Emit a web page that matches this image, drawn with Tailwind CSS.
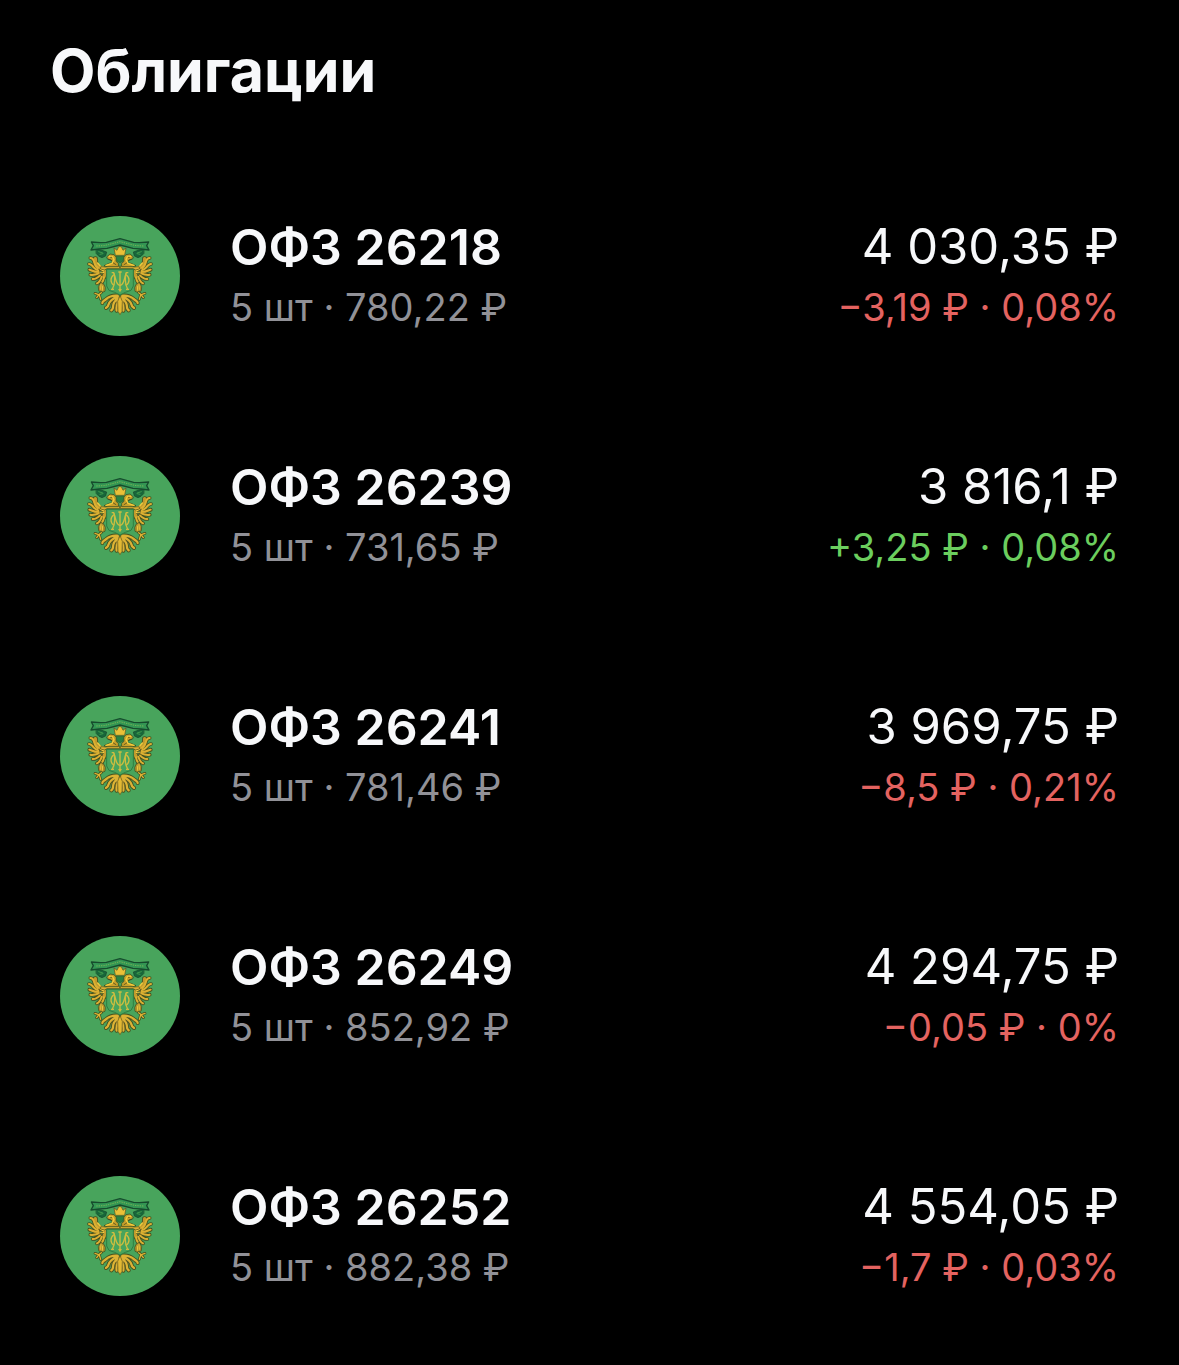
<!DOCTYPE html>
<html lang="ru">
<head>
    <meta charset="UTF-8">
    <meta name="viewport" content="width=device-width, initial-scale=1.0">
    <title>Облигации</title>
    <script src="https://cdn.jsdelivr.net/npm/@tailwindcss/browser@4"></script>
</head>
<body class="min-h-screen bg-black font-['Inter','Liberation_Sans',sans-serif] text-[#f7f8fa]">
    <!-- Shared issuer emblem -->
    <svg class="hidden" aria-hidden="true">
        <defs>
            <g id="half" stroke-linecap="round" stroke-linejoin="round">
                <!-- Side heads -->
                <path d="M139 129l17 4 14 5-3 12-11 5-9-4-8-8z" fill="#17663a" stroke="#174a2b" stroke-width="2"/>
                <path d="M146 137l12 4M150 145l9-2" stroke="#3f9a4c" stroke-width="3" fill="none"/>
                <!-- Wing feathers, dark edge below the gold -->
                <g fill="none">
                    <path d="M121 156c6 0 10 6 12 14s5 13 12 16M117 174c6 0 10 5 14 10s8 7 14 8M118 191c6 2 14 7 28 7M121 206c8 2 16 0 26-4M128 219c8 1 15-4 22-11M141 232c6-3 11-10 14-20M154 232c4-4 7-10 8-18" stroke="#44501f" stroke-width="11"/>
                    <path d="M136 158c-1 14 4 24 18 30s12 10 8 24" stroke="#44501f" stroke-width="15"/>
                    <path d="M136 158c-1 14 4 24 18 30s12 10 8 24" stroke="#c29a2c" stroke-width="10"/>
                    <path d="M121 156c6 0 10 6 12 14s5 13 12 16M117 174c6 0 10 5 14 10s8 7 14 8M118 191c6 2 14 7 28 7M121 206c8 2 16 0 26-4M128 219c8 1 15-4 22-11M141 232c6-3 11-10 14-20M154 232c4-4 7-10 8-18" stroke="#dcb032" stroke-width="6"/>
                    <path d="M143 171l8 9 10 4M152 190l9 4M153 199l8 1" stroke="#f2cf42" stroke-width="4"/>
                    <path d="M146 190l8 5M147 205l9-4M155 208l5-5" stroke="#625720" stroke-width="3"/>
                </g>
                <path d="M154 182l14 1 14-4 27 1v8h-38l-8 4-11-3z" fill="#d9ae32" stroke="#44501f" stroke-width="2"/>
                <!-- Eagle head and neck -->
                <path d="M171 152l9-8 12 2 7 8-1 12 7 6v10h-34l-9-3 15-7 11-2-4-8-11-3z" fill="#c9a02a" stroke="#2b431d" stroke-width="2"/>
                <path d="M178 151l10 1 4 9-6 11-18 6" stroke="#f3cd3d" stroke-width="4" fill="none"/>
                <path d="M182 154h3M175 160l8 3M190 171l8 5" stroke="#3a3e1c" stroke-width="2" fill="none"/>
                <!-- Leg and claw -->
                <path d="M153 229l9 6 4 10-1 11-10 4-9-6-1-11z" fill="#b18f2a" stroke="#3a4c1f" stroke-width="2"/>
                <path d="M153 236l-1 14M158 240l-1 13" stroke="#efc93d" stroke-width="3" fill="none"/>
                <path d="M154 260l-8 6-11-4M146 267l-6 8M148 267l4 13" stroke="#3a4c1f" stroke-width="8" fill="none"/>
                <path d="M154 260l-8 6-11-4M146 267l-6 8M148 267l4 13" stroke="#dfb433" stroke-width="4" fill="none"/>
                <!-- Tail feathers -->
                <g fill="none">
                    <path d="M203 269c-17-2-27 4-34 10s-12 6-12 12M203 273c-15 3-26 15-28 24s-6 6-7 9M206 274c-10 8-17 20-17 29s-4 7-5 10M208 276c-6 11-10 23-8 38" stroke="#44501f" stroke-width="12"/>
                    <path d="M203 269c-17-2-27 4-34 10s-12 6-12 12M203 273c-15 3-26 15-28 24s-6 6-7 9M206 274c-10 8-17 20-17 29s-4 7-5 10M208 276c-6 11-10 23-8 38" stroke="#ddb234" stroke-width="7"/>
                    <path d="M181 276c-7 3-12 8-15 14M191 284c-7 7-10 13-11 19M200 288c-4 9-6 16-6 23" stroke="#786624" stroke-width="2"/>
                </g>
            </g>
            <symbol id="emblem" viewBox="30 30 360 360">
                <circle cx="210" cy="210" r="180" fill="#48a45c"/>
                <use href="#half"/>
                <use href="#half" transform="matrix(-1 0 0 1 420 0)"/>
                <path d="M210 269l7 17-1 30-6 10-6-10-1-30z" fill="#e2b833" stroke="#5b5420" stroke-width="2"/>
                <!-- Ribbon -->
                <path d="M124 108l28 2 17-1 41-11 41 11 17 1 28-2-6 11 7 13-25-3-23-2-39-10-39 10-23 2-25 3 7-13z" fill="#339653" stroke="#164c2d" stroke-width="4" stroke-linejoin="round"/>
                <path d="M139 120l22-1 14-3 35-9 35 9 14 3 22 1" fill="none" stroke="#79b553" stroke-width="3" stroke-dasharray="4 3"/>
                <!-- Crown -->
                <path d="M192 126l9 7 5-11h8l5 11 9-7-4 22h-28z" fill="#e9c038" stroke="#5b5420" stroke-width="2" stroke-linejoin="round"/>
                <path d="M198 151h24l-3 14-9 5-9-5z" fill="#288443" stroke="#36602a" stroke-width="2"/>
                <!-- Shield -->
                <path d="M170 190h80v50l-7 13-17 6-16 8-16-8-17-6-7-13z" fill="#48a45c" stroke="#2f7d42" stroke-width="3"/>
                <path d="M171 188h78" stroke="#66702c" stroke-width="3"/>
                <!-- Monogram -->
                <g fill="none" stroke="#cdbd40" stroke-width="4">
                    <path d="M185 200h6c3 5 3 12 3 22s-3 20-7 27M235 200h-6c-3 5-3 12-3 22s3 20 7 27M183 250h9M228 250h9"/>
                    <path d="M191 202c4 7 5 18 9 27 3 7 7 9 10 9s7-2 10-9c4-9 5-20 9-27"/>
                    <path d="M191 207c-6 4-8 9-8 15s3 12 9 16M229 207c6 4 8 9 8 15s-3 12-9 16"/>
                    <path d="M205 198h10M210 198v56M206 249l4 6 4-6"/>
                </g>
            </symbol>
        </defs>
    </svg>

    <main>
        <h1 class="px-[50px] pt-9 text-[59px] leading-[70px] font-bold">Облигации</h1>

        <ul class="mt-[50px]">
            <li>
                <a href="#" class="flex items-center gap-[50px] px-[60px] py-[59px]">
                    <svg class="size-[120px] shrink-0" role="img" aria-label="Минфин"><use href="#emblem"/></svg>
                    <div class="flex-1 pt-0.5">
                        <h2 class="text-[50px] leading-[60px] font-semibold">ОФЗ 26218</h2>
                        <p class="text-[38px] leading-[60px] text-[#919197]">5 шт · 780,22 ₽</p>
                    </div>
                    <div class="pt-0.5 text-right">
                        <p class="text-[49px] leading-[60px]">4 030,35 ₽</p>
                        <p class="text-[38px] leading-[60px] text-[#e46360]">−3,19 ₽ · 0,08%</p>
                    </div>
                </a>
            </li>
            <li>
                <a href="#" class="flex items-center gap-[50px] px-[60px] py-[59px]">
                    <svg class="size-[120px] shrink-0" role="img" aria-label="Минфин"><use href="#emblem"/></svg>
                    <div class="flex-1 pt-0.5">
                        <h2 class="text-[50px] leading-[60px] font-semibold">ОФЗ 26239</h2>
                        <p class="text-[38px] leading-[60px] text-[#919197]">5 шт · 731,65 ₽</p>
                    </div>
                    <div class="pt-0.5 text-right">
                        <p class="text-[49px] leading-[60px]">3 816,1 ₽</p>
                        <p class="text-[38px] leading-[60px] text-[#6bce5e]">+3,25 ₽ · 0,08%</p>
                    </div>
                </a>
            </li>
            <li>
                <a href="#" class="flex items-center gap-[50px] px-[60px] py-[59px]">
                    <svg class="size-[120px] shrink-0" role="img" aria-label="Минфин"><use href="#emblem"/></svg>
                    <div class="flex-1 pt-0.5">
                        <h2 class="text-[50px] leading-[60px] font-semibold">ОФЗ 26241</h2>
                        <p class="text-[38px] leading-[60px] text-[#919197]">5 шт · 781,46 ₽</p>
                    </div>
                    <div class="pt-0.5 text-right">
                        <p class="text-[49px] leading-[60px]">3 969,75 ₽</p>
                        <p class="text-[38px] leading-[60px] text-[#e46360]">−8,5 ₽ · 0,21%</p>
                    </div>
                </a>
            </li>
            <li>
                <a href="#" class="flex items-center gap-[50px] px-[60px] py-[59px]">
                    <svg class="size-[120px] shrink-0" role="img" aria-label="Минфин"><use href="#emblem"/></svg>
                    <div class="flex-1 pt-0.5">
                        <h2 class="text-[50px] leading-[60px] font-semibold">ОФЗ 26249</h2>
                        <p class="text-[38px] leading-[60px] text-[#919197]">5 шт · 852,92 ₽</p>
                    </div>
                    <div class="pt-0.5 text-right">
                        <p class="text-[49px] leading-[60px]">4 294,75 ₽</p>
                        <p class="text-[38px] leading-[60px] text-[#e46360]">−0,05 ₽ · 0%</p>
                    </div>
                </a>
            </li>
            <li>
                <a href="#" class="flex items-center gap-[50px] px-[60px] py-[59px]">
                    <svg class="size-[120px] shrink-0" role="img" aria-label="Минфин"><use href="#emblem"/></svg>
                    <div class="flex-1 pt-0.5">
                        <h2 class="text-[50px] leading-[60px] font-semibold">ОФЗ 26252</h2>
                        <p class="text-[38px] leading-[60px] text-[#919197]">5 шт · 882,38 ₽</p>
                    </div>
                    <div class="pt-0.5 text-right">
                        <p class="text-[49px] leading-[60px]">4 554,05 ₽</p>
                        <p class="text-[38px] leading-[60px] text-[#e46360]">−1,7 ₽ · 0,03%</p>
                    </div>
                </a>
            </li>
        </ul>
    </main>
</body>
</html>
